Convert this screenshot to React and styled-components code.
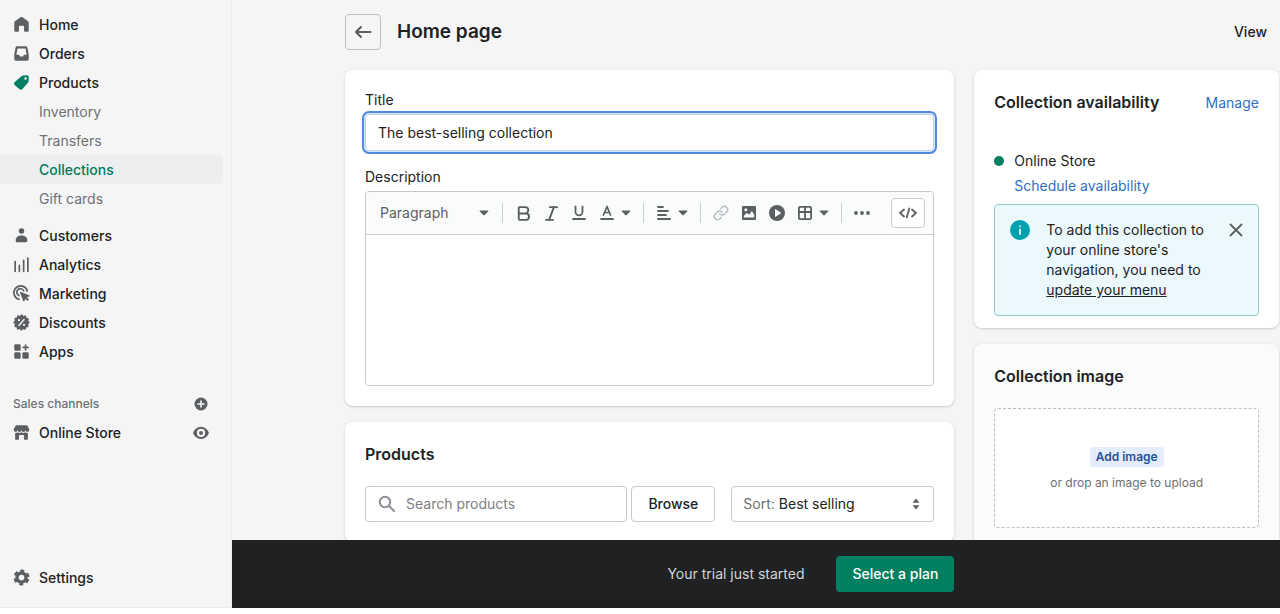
import React from "react";
import styled, { createGlobalStyle } from "styled-components";
import { Bold, Italic, Link } from "lucide-react";

const mainLinks = [
  { label: "Home", icon: <HomeIcon /> },
  { label: "Orders", icon: <OrdersIcon /> },
  { label: "Products", icon: <ProductsIcon />, active: true },
];

const productLinks = ["Inventory", "Transfers", "Collections", "Gift cards"];

const toolLinks = [
  { label: "Customers", icon: <CustomersIcon /> },
  { label: "Analytics", icon: <AnalyticsIcon /> },
  { label: "Marketing", icon: <MarketingIcon /> },
  { label: "Discounts", icon: <DiscountsIcon /> },
  { label: "Apps", icon: <AppsIcon /> },
];

export default function App() {
  return (
    <>
      <GlobalStyle />
      <Shell>
        <Sidebar />
        <Content>
          <Scroller>
            <PageHeader>
              <BackButton type="button" aria-label="Back">
                <BackIcon />
              </BackButton>
              <PageTitle>Home page</PageTitle>
              <ViewLink href="#view">View</ViewLink>
            </PageHeader>
            <Columns>
              <Stack>
                <DetailsCard />
                <ProductsCard />
              </Stack>
              <Stack>
                <AvailabilityCard />
                <ImageCard />
              </Stack>
            </Columns>
          </Scroller>
          <TrialBar>
            <TrialInner>
              <TrialText>Your trial just started</TrialText>
              <PlanButton type="button">Select a plan</PlanButton>
            </TrialInner>
          </TrialBar>
        </Content>
      </Shell>
    </>
  );
}

function Sidebar() {
  return (
    <Nav>
      <NavGroup>
        {mainLinks.map((link) => (
          <NavLink key={link.label} href="#" $active={link.active}>
            {link.icon}
            {link.label}
          </NavLink>
        ))}
        {productLinks.map((label) => (
          <SubLink key={label} href="#" $selected={label === "Collections"}>
            {label}
          </SubLink>
        ))}
      </NavGroup>
      <NavGroup>
        {toolLinks.map((link) => (
          <NavLink key={link.label} href="#">
            {link.icon}
            {link.label}
          </NavLink>
        ))}
      </NavGroup>
      <ChannelGroup>
        <NavRow>
          <ChannelTitle>Sales channels</ChannelTitle>
          <NavAction type="button" aria-label="Add sales channel">
            <PlusIcon />
          </NavAction>
        </NavRow>
        <NavRow>
          <NavLink href="#">
            <StoreIcon />
            Online Store
          </NavLink>
          <NavAction type="button" aria-label="View online store">
            <EyeIcon />
          </NavAction>
        </NavRow>
      </ChannelGroup>
      <NavFooter>
        <NavLink href="#">
          <SettingsIcon />
          Settings
        </NavLink>
      </NavFooter>
    </Nav>
  );
}

function DetailsCard() {
  return (
    <Card>
      <Label htmlFor="title">Title</Label>
      <TitleInput id="title" type="text" defaultValue="The best-selling collection" />
      <Label htmlFor="description">Description</Label>
      <Editor>
        <Toolbar>
          <FormatField>
            <FormatSelect aria-label="Formatting">
              <option>Paragraph</option>
            </FormatSelect>
            <CaretIcon />
          </FormatField>
          <Divider />
          <Tool type="button" aria-label="Bold">
            <Bold size={19} strokeWidth={2.4} />
          </Tool>
          <Tool type="button" aria-label="Italic">
            <Italic size={19} strokeWidth={2.4} />
          </Tool>
          <Tool type="button" aria-label="Underline">
            <UnderlineIcon />
          </Tool>
          <MenuTool type="button" aria-label="Text color">
            <TextColorIcon />
            <CaretIcon />
          </MenuTool>
          <Divider />
          <MenuTool type="button" aria-label="Alignment">
            <AlignIcon />
            <CaretIcon />
          </MenuTool>
          <Divider />
          <Tool type="button" aria-label="Insert link" disabled>
            <Link size={16} strokeWidth={2.2} />
          </Tool>
          <Tool type="button" aria-label="Insert image">
            <ImageIcon />
          </Tool>
          <Tool type="button" aria-label="Insert video">
            <PlayIcon />
          </Tool>
          <MenuTool type="button" aria-label="Insert table">
            <TableIcon />
            <CaretIcon />
          </MenuTool>
          <Divider />
          <Tool type="button" aria-label="More">
            <DotsIcon />
          </Tool>
          <CodeButton type="button" aria-label="Show HTML">
            <CodeIcon />
          </CodeButton>
        </Toolbar>
        <EditorBody id="description" />
      </Editor>
    </Card>
  );
}

function ProductsCard() {
  return (
    <Card>
      <CardTitle>Products</CardTitle>
      <Filters>
        <SearchField>
          <SearchIcon />
          <SearchInput type="search" aria-label="Search products" placeholder="Search products" />
        </SearchField>
        <BrowseButton type="button">Browse</BrowseButton>
        <SortField>
          <SortLabel htmlFor="sort">Sort:</SortLabel>
          <SortSelect id="sort">
            <option>Best selling</option>
          </SortSelect>
          <SortIcon />
        </SortField>
      </Filters>
    </Card>
  );
}

function AvailabilityCard() {
  return (
    <Card>
      <CardHeader>
        <CardTitle>Collection availability</CardTitle>
        <TextLink href="#manage">Manage</TextLink>
      </CardHeader>
      <Channel>
        <StatusDot />
        <span>Online Store</span>
        <ScheduleLink href="#schedule">Schedule availability</ScheduleLink>
      </Channel>
      <Banner>
        <InfoIcon />
        <BannerText>
          To add this collection to your online store's navigation, you need to{" "}
          <a href="#menu">update your menu</a>
        </BannerText>
        <CloseButton type="button" aria-label="Dismiss">
          <CloseIcon />
        </CloseButton>
      </Banner>
    </Card>
  );
}

function ImageCard() {
  return (
    <Card $subdued>
      <CardTitle>Collection image</CardTitle>
      <DropZone>
        <AddButton type="button">Add image</AddButton>
        <Hint>or drop an image to upload</Hint>
      </DropZone>
    </Card>
  );
}

function HomeIcon() {
  return (
    <NavSvg viewBox="0 0 20 20">
      <path d="M18.500 7.800v9.200a1.500 1.500 0 0 1-1.500 1.500h-2.500A1.500 1.500 0 0 1 13 17v-4.500a1 1 0 0 0-1-1H8a1 1 0 0 0-1 1V17a1.500 1.500 0 0 1-1.500 1.500H3A1.500 1.500 0 0 1 1.500 17V7.800c0-.6.300-1.200.8-1.500l6.500-4.700c.7-.5 1.700-.5 2.400 0l6.500 4.700c.5.300.8.900.8 1.500z" />
    </NavSvg>
  );
}

function OrdersIcon() {
  return (
    <NavSvg viewBox="0 0 20 20">
      <path
        fillRule="evenodd"
        d="M5 1.500h10a2 2 0 0 1 2 1.700L18.500 11v5.500a2 2 0 0 1-2 2h-13a2 2 0 0 1-2-2V11L3 3.200a2 2 0 0 1 2-1.700zM5.300 4 4 11.500h2.600a1 1 0 0 1 .9.600l.7 1.400h3.600l.7-1.400a1 1 0 0 1 .9-.6H16L14.700 4z"
      />
    </NavSvg>
  );
}

function ProductsIcon() {
  return (
    <NavSvg viewBox="0 0 20 20">
      <path
        fillRule="evenodd"
        d="M9.500 2.800a4 4 0 0 1 2.600-1.100l4.400-.2a2 2 0 0 1 2.100 2.100l-.2 4.600a4 4 0 0 1-1.100 2.500l-6.200 6.900a2.600 2.600 0 0 1-3.700.1L1.800 12.800a2.200 2.200 0 0 1 0-3.100zM14.800 6.800a1.500 1.500 0 1 0 0-3 1.500 1.500 0 0 0 0 3z"
      />
    </NavSvg>
  );
}

function CustomersIcon() {
  return (
    <NavSvg viewBox="0 0 20 20">
      <circle cx="10" cy="4.800" r="3.200" />
      <path d="M3.200 15.300c0-3.200 2.600-5.300 6.800-5.300s6.800 2.100 6.800 5.300v.9a1.800 1.800 0 0 1-1.800 1.800H5a1.800 1.800 0 0 1-1.800-1.800z" />
    </NavSvg>
  );
}

function AnalyticsIcon() {
  return (
    <NavSvg viewBox="0 0 20 20">
      <path
        fill="none"
        stroke="currentColor"
        strokeWidth="2"
        strokeLinecap="round"
        d="M2.500 6.500V18M7.500 11v7M12.500 5v13M17.500 2.500V18"
      />
    </NavSvg>
  );
}

function MarketingIcon() {
  return (
    <NavSvg viewBox="0 0 20 20">
      <g fill="none" stroke="currentColor" strokeWidth="2" strokeLinecap="round">
        <path d="M16.800 7A8 8 0 1 0 7 16.800" />
        <path d="M12.600 7A4.200 4.200 0 1 0 7 12.400" />
      </g>
      <path d="M9.300 8.300 19 12c.7.300.7 1.100 0 1.400l-2.700 1.100 2.500 2.600-1.600 1.600-2.600-2.500-1.100 2.700c-.3.700-1.200.7-1.400 0L8.300 9.300c-.2-.6.400-1.200 1-1z" />
    </NavSvg>
  );
}

function DiscountsIcon() {
  return (
    <NavSvg viewBox="0 0 20 20">
      <circle cx="10" cy="10" r="8.300" />
      <circle
        cx="10"
        cy="10"
        r="7.900"
        fill="none"
        stroke="currentColor"
        strokeWidth="3.200"
        strokeLinecap="round"
        strokeDasharray="0.010 4.126"
      />
      <g stroke="#f5f5f6" strokeWidth="1.600" strokeLinecap="round">
        <path d="m13 6.500-6 7" />
        <path strokeWidth="2.600" d="M7 7.300h.01M13 12.800h.01" />
      </g>
    </NavSvg>
  );
}

function AppsIcon() {
  return (
    <NavSvg viewBox="0 0 20 20">
      <rect x="1.500" y="1.500" width="7.500" height="7.500" rx="1.500" />
      <rect x="1.500" y="11" width="7.500" height="7.500" rx="1.500" />
      <rect x="11" y="11" width="7.500" height="7.500" rx="1.500" />
      <path stroke="currentColor" strokeWidth="2" strokeLinecap="round" d="M14.800 2.500v5.500M12 5.250h5.600" />
    </NavSvg>
  );
}

function StoreIcon() {
  return (
    <NavSvg viewBox="0 0 20 20">
      <path d="M4 1.500h12a1 1 0 0 1 .9.600L19 6v1a2.200 2.200 0 0 1-4.400 0 2.300 2.300 0 0 1-4.600 0 2.300 2.300 0 0 1-4.600 0A2.200 2.200 0 0 1 1 7V6l2.100-3.900A1 1 0 0 1 4 1.500z" />
      <path d="M2.500 10.600c1.200.3 2.400-.1 3.100-.8 1.200 1 3.200 1 4.400 0 1.200 1 3.200 1 4.400 0 .7.700 1.900 1.100 3.100.8v6.900a1 1 0 0 1-1 1H14a1 1 0 0 1-1-1V14a1 1 0 0 0-1-1H8a1 1 0 0 0-1 1v3.500a1 1 0 0 1-1 1H3.500a1 1 0 0 1-1-1z" />
    </NavSvg>
  );
}

function SettingsIcon() {
  return (
    <NavSvg viewBox="0 0 20 20">
      <g fill="none" stroke="currentColor">
        <circle cx="10" cy="10" r="5.300" strokeWidth="4" />
        <circle
          cx="10"
          cy="10"
          r="7.600"
          strokeWidth="3.600"
          strokeDasharray="4.400 3.559"
          strokeDashoffset="-1.780"
        />
      </g>
    </NavSvg>
  );
}

function PlusIcon() {
  return (
    <svg width="16" height="16" viewBox="0 0 16 16">
      <circle cx="8" cy="8" r="6.500" fill="currentColor" />
      <path stroke="#f5f5f6" strokeWidth="1.600" strokeLinecap="round" d="M8 5v6M5 8h6" />
    </svg>
  );
}

function EyeIcon() {
  return (
    <svg width="16" height="16" viewBox="0 0 16 16" fill="currentColor">
      <path
        fillRule="evenodd"
        d="M8 1.800c4 0 6.800 3.200 7.800 5.700a1 1 0 0 1 0 .8C14.800 10.800 12 14 8 14S1.200 10.800.2 8.300a1 1 0 0 1 0-.8C1.200 5 4 1.800 8 1.800zM8 12a4.100 4.100 0 1 0 0-8.200A4.100 4.100 0 0 0 8 12z"
      />
      <circle cx="8" cy="8" r="2" />
    </svg>
  );
}

function BackIcon() {
  return (
    <svg width="20" height="20" viewBox="0 0 20 20" fill="none" stroke="currentColor" strokeWidth="2">
      <path strokeLinecap="round" strokeLinejoin="round" d="M17.500 10H3.500M8 5l-5 5 5 5" />
    </svg>
  );
}

function CaretIcon() {
  return (
    <svg width="10" height="6" viewBox="0 0 10 6" fill="currentColor">
      <path d="M1 .5h8c.4 0 .6.500.3.800L5.400 5.300a.6.600 0 0 1-.8 0L.7 1.300C.4 1 .6.500 1 .5z" />
    </svg>
  );
}

function UnderlineIcon() {
  return (
    <svg width="16" height="16" viewBox="0 0 16 16" fill="none" stroke="currentColor" strokeLinecap="round">
      <path strokeWidth="1.800" d="M4.500 1.500v5.300a3.500 3.500 0 0 0 7 0V1.500" />
      <path strokeWidth="1.800" d="M2 14h12" />
    </svg>
  );
}

function TextColorIcon() {
  return (
    <svg width="16" height="16" viewBox="0 0 16 16" fill="none" stroke="currentColor" strokeLinecap="round">
      <path strokeWidth="1.700" strokeLinejoin="round" d="M4.500 10 8 1.500l3.500 8.500M5.700 7.500h4.600" />
      <path strokeWidth="1.800" d="M2 14h12" />
    </svg>
  );
}

function AlignIcon() {
  return (
    <svg width="16" height="16" viewBox="0 0 16 16" stroke="currentColor" strokeWidth="1.800" strokeLinecap="round">
      <path d="M2 2h5M2 6h10M2 10h8M2 14h12" />
    </svg>
  );
}

function ImageIcon() {
  return (
    <svg width="16" height="16" viewBox="0 0 16 16" fill="currentColor">
      <path
        fillRule="evenodd"
        d="M2 1h12a1 1 0 0 1 1 1v12a1 1 0 0 1-1 1H2a1 1 0 0 1-1-1V2a1 1 0 0 1 1-1zm.8 11.500h10.400V9.500L10.800 6 8.500 9.500 5.500 8 2.800 11zM4.800 6.200a1.500 1.500 0 1 0 0-3 1.500 1.500 0 0 0 0 3z"
      />
    </svg>
  );
}

function PlayIcon() {
  return (
    <svg width="16" height="16" viewBox="0 0 16 16">
      <circle cx="8" cy="8" r="8" fill="currentColor" />
      <path fill="#fafbfb" d="M6 4.600v6.800c0 .4.400.6.700.4l5-3.400a.5.500 0 0 0 0-.8l-5-3.400c-.3-.2-.7 0-.7.400z" />
    </svg>
  );
}

function TableIcon() {
  return (
    <svg width="16" height="16" viewBox="0 0 16 16" fill="none" stroke="currentColor" strokeWidth="1.800">
      <rect x="1.900" y="1.900" width="12.200" height="12.200" rx="1" />
      <path d="M8 2v12M2 7h12" />
    </svg>
  );
}

function DotsIcon() {
  return (
    <svg width="16" height="16" viewBox="0 0 16 16" fill="currentColor">
      <circle cx="2" cy="8" r="1.900" />
      <circle cx="8" cy="8" r="1.900" />
      <circle cx="14" cy="8" r="1.900" />
    </svg>
  );
}

function CodeIcon() {
  return (
    <svg width="18" height="16" viewBox="0 0 18 16" fill="none" stroke="currentColor" strokeWidth="1.800">
      <path strokeLinecap="round" strokeLinejoin="round" d="M5 4.500 1 8l4 3.500M13 4.500 17 8l-4 3.500M10.300 3.500l-2.600 9" />
    </svg>
  );
}

function SearchIcon() {
  return (
    <svg width="18" height="18" viewBox="0 0 18 18" fill="none" stroke="#8c9196" strokeWidth="2">
      <circle cx="7" cy="7" r="5.200" />
      <path strokeLinecap="round" d="m11 11 5 5" />
    </svg>
  );
}

function SortIcon() {
  return (
    <svg width="8" height="12" viewBox="0 0 8 12" fill="#5c5f62">
      <path d="M.5 4.800 3.600 1a.5.500 0 0 1 .8 0l3.100 3.800zM.5 7.200 3.600 11a.5.500 0 0 0 .8 0l3.100-3.800z" />
    </svg>
  );
}

function InfoIcon() {
  return (
    <svg width="20" height="20" viewBox="0 0 20 20">
      <circle cx="10" cy="10" r="10" fill="#00a0ac" />
      <path stroke="#ebf9fc" strokeWidth="1.800" strokeLinecap="round" d="M10 9.500v4.500M10 6.200v.1" />
    </svg>
  );
}

function CloseIcon() {
  return (
    <svg width="14" height="14" viewBox="0 0 14 14" stroke="currentColor" strokeWidth="1.800">
      <path strokeLinecap="round" d="m1.500 1.500 11 11M12.500 1.500l-11 11" />
    </svg>
  );
}

const GlobalStyle = createGlobalStyle`
  * {
    box-sizing: border-box;
  }
  body {
    margin: 0;
    background: #fff;
    color: #202223;
    font: 400 14px/20px Inter, "Liberation Sans", sans-serif;
  }
  button, input, select, textarea {
    font: inherit;
    color: inherit;
  }
  a {
    color: inherit;
    text-decoration: none;
  }
`;

const Shell = styled.div`
  display: grid;
  grid-template-columns: 232px minmax(0, 1fr);
  height: 100vh;
  padding-bottom: 6px;
`;

const Nav = styled.nav`
  display: flex;
  flex-direction: column;
  gap: 8px;
  padding: 10px 8px 15px 0;
  border-right: 1px solid #ebeced;
  border-bottom: 1px solid #ebeced;
  background: #f5f5f6;
`;
const NavGroup = styled.div`
  display: flex;
  flex-direction: column;
`;
const ChannelGroup = styled(NavGroup)`
  padding-top: 15px;
`;
const NavFooter = styled(NavGroup)`
  margin-top: auto;
`;
const NavLink = styled.a`
  display: flex;
  align-items: center;
  gap: 9px;
  height: 29px;
  padding-left: 13px;
  font-weight: 500;

  svg {
    color: ${(props) => (props.$active ? "#008060" : "#5c5f62")};
  }
`;
const SubLink = styled.a`
  height: 29px;
  padding-left: 39px;
  border-radius: 0 3px 3px 0;
  line-height: 29px;
  font-weight: ${(props) => (props.$selected ? 500 : 400)};
  color: ${(props) => (props.$selected ? "#007a5c" : "#6d7175")};
  background: ${(props) => (props.$selected ? "#edeeef" : "transparent")};
`;
const NavRow = styled.div`
  display: flex;
  align-items: center;
  justify-content: space-between;
  height: 29px;
  padding-right: 14px;
`;
const ChannelTitle = styled.span`
  padding-left: 13px;
  font-size: 12px;
  font-weight: 500;
  color: #6d7175;
`;
const NavAction = styled.button`
  display: flex;
  padding: 0;
  border: 0;
  background: none;
  color: #5c5f62;
`;
const NavSvg = styled.svg`
  width: 17px;
  height: 17px;
  fill: currentColor;
`;

const Content = styled.div`
  display: flex;
  flex-direction: column;
  min-height: 0;
  background: #f5f5f6;
`;
const Scroller = styled.main`
  flex: 1;
  min-height: 0;
  overflow: hidden;
  padding: 14px 1px 0 113px;
`;
const PageHeader = styled.header`
  display: flex;
  align-items: center;
  gap: 16px;
  margin-bottom: 20px;
  padding-right: 12px;
`;
const BackButton = styled.button`
  display: flex;
  align-items: center;
  justify-content: center;
  width: 36px;
  height: 36px;
  padding: 0;
  border: 1px solid #babfc3;
  border-radius: 4px;
  background: none;
  color: #5c5f62;
`;
const PageTitle = styled.h1`
  flex: 1;
  margin: 0;
  font-size: 19px;
  line-height: 28px;
  font-weight: 600;
`;
const ViewLink = styled.a`
  font-weight: 500;
`;

const Columns = styled.div`
  display: grid;
  grid-template-columns: minmax(0, 2fr) minmax(0, 1fr);
  align-items: start;
  gap: 20px;
`;
const Stack = styled.div`
  display: flex;
  flex-direction: column;
  gap: 16px;
`;
const Card = styled.section`
  padding: 20px;
  border-radius: 8px;
  background: ${(props) => (props.$subdued ? "#fafbfb" : "#fff")};
  box-shadow: 0 0 5px rgba(23, 24, 24, 0.05), 0 1px 2px rgba(0, 0, 0, 0.15);
`;
const CardHeader = styled.div`
  display: flex;
  align-items: center;
  justify-content: space-between;
`;
const CardTitle = styled.h2`
  margin: 0;
  font-size: 16px;
  line-height: 25px;
  font-weight: 600;
`;
const TextLink = styled.a`
  color: #2f6fbf;
`;

const Label = styled.label`
  display: block;
  margin-bottom: 4px;
`;
const TitleInput = styled.input`
  display: block;
  width: 100%;
  height: 37px;
  margin-bottom: 16px;
  padding: 0 12px;
  border: 1px solid #bcd3f5;
  border-radius: 4px;
  outline: 2px solid #5289e0;
  outline-offset: 1px;
  box-shadow: 0 0 0 1px #d5e4fb;
`;
const Editor = styled.div`
  border: 1px solid #c4c8cb;
  border-radius: 4px;
  overflow: hidden;
`;
const Toolbar = styled.div`
  display: flex;
  align-items: center;
  height: 43px;
  padding-right: 8px;
  border-bottom: 1px solid #c9cccf;
  background: #fafbfb;
  color: #5c5f62;
`;
const FormatField = styled.div`
  display: flex;
  align-items: center;
  width: 130px;
  padding: 0 7px 0 14px;
`;
const FormatSelect = styled.select`
  flex: 1;
  min-width: 0;
  padding: 0;
  border: 0;
  appearance: none;
  background: none;
`;
const Divider = styled.span`
  width: 1px;
  height: 20px;
  margin: 0 6px;
  background: #c9cccf;
`;
const Tool = styled.button`
  display: flex;
  align-items: center;
  justify-content: center;
  width: 28px;
  height: 28px;
  padding: 0;
  border: 0;
  background: none;

  &:disabled {
    color: #babec3;
  }
`;
const MenuTool = styled(Tool)`
  gap: 6px;
  width: 44px;
`;
const CodeButton = styled(Tool)`
  width: 34px;
  height: 30px;
  margin-left: auto;
  border: 1px solid #c9cccf;
  border-radius: 4px;
  background: #fff;
`;
const EditorBody = styled.textarea`
  display: block;
  width: 100%;
  height: 150px;
  padding: 12px;
  border: 0;
  resize: none;
`;

const Filters = styled.div`
  display: flex;
  margin-top: 19px;
`;
const Field = styled.div`
  display: flex;
  align-items: center;
  height: 36px;
  border: 1px solid #c4c8cb;
  border-radius: 4px;
`;
const SearchField = styled(Field)`
  flex: 1;
  gap: 10px;
  min-width: 0;
  padding: 0 12px;
`;
const SearchInput = styled.input`
  flex: 1;
  min-width: 0;
  padding: 0;
  border: 0;

  &::placeholder {
    color: #7c8083;
  }
`;
const BrowseButton = styled.button`
  height: 36px;
  margin: 0 16px 0 4px;
  padding: 0 16px;
  border: 1px solid #c9cccf;
  border-radius: 4px;
  background: #fff;
  font-weight: 500;
`;
const SortField = styled(Field)`
  gap: 4px;
  width: 203px;
  padding: 0 13px 0 11px;
`;
const SortLabel = styled.label`
  color: #6d7175;
`;
const SortSelect = styled.select`
  flex: 1;
  min-width: 0;
  padding: 0;
  border: 0;
  appearance: none;
  background: none;
`;

const Channel = styled.div`
  display: grid;
  grid-template-columns: 10px 1fr;
  align-items: center;
  gap: 5px 10px;
  margin-top: 36px;
`;
const StatusDot = styled.span`
  width: 10px;
  height: 10px;
  border-radius: 50%;
  background: #008060;
`;
const ScheduleLink = styled(TextLink)`
  grid-column: 2;
`;
const Banner = styled.div`
  display: flex;
  align-items: flex-start;
  margin: 8px 0 -8px;
  padding: 15px;
  border: 1px solid #98c6cd;
  border-radius: 4px;
  background: #ebf9fc;
`;
const BannerText = styled.p`
  flex: 1;
  margin: 0 20px 0 16px;

  a {
    text-decoration: underline;
  }
`;
const CloseButton = styled.button`
  display: flex;
  padding: 3px 0;
  border: 0;
  background: none;
  color: #5c5f62;
`;

const DropZone = styled.div`
  display: flex;
  flex-direction: column;
  align-items: center;
  justify-content: center;
  gap: 6px;
  height: 120px;
  margin-top: 19px;
  padding-top: 4px;
  border: 1px dashed #babfc3;
  border-radius: 4px;
  background: #fff;
`;
const AddButton = styled.button`
  height: 20px;
  padding: 0 6px;
  border: 0;
  border-radius: 3px;
  background: #e4edfb;
  color: #1f5199;
  font-size: 12px;
  line-height: 20px;
  font-weight: 600;
`;
const Hint = styled.span`
  font-size: 12px;
  color: #6d7175;
`;

const TrialBar = styled.div`
  padding: 16px 1px 16px 113px;
  background: #202123;
`;
const TrialInner = styled.div`
  display: flex;
  align-items: center;
  justify-content: flex-end;
  gap: 32px;
  width: calc((100% - 20px) * 2 / 3);
`;
const TrialText = styled.span`
  color: #d2d5d8;
`;
const PlanButton = styled.button`
  height: 36px;
  padding: 0 16px;
  border: 0;
  border-radius: 4px;
  background: #008060;
  color: #fff;
  font-weight: 500;
`;
